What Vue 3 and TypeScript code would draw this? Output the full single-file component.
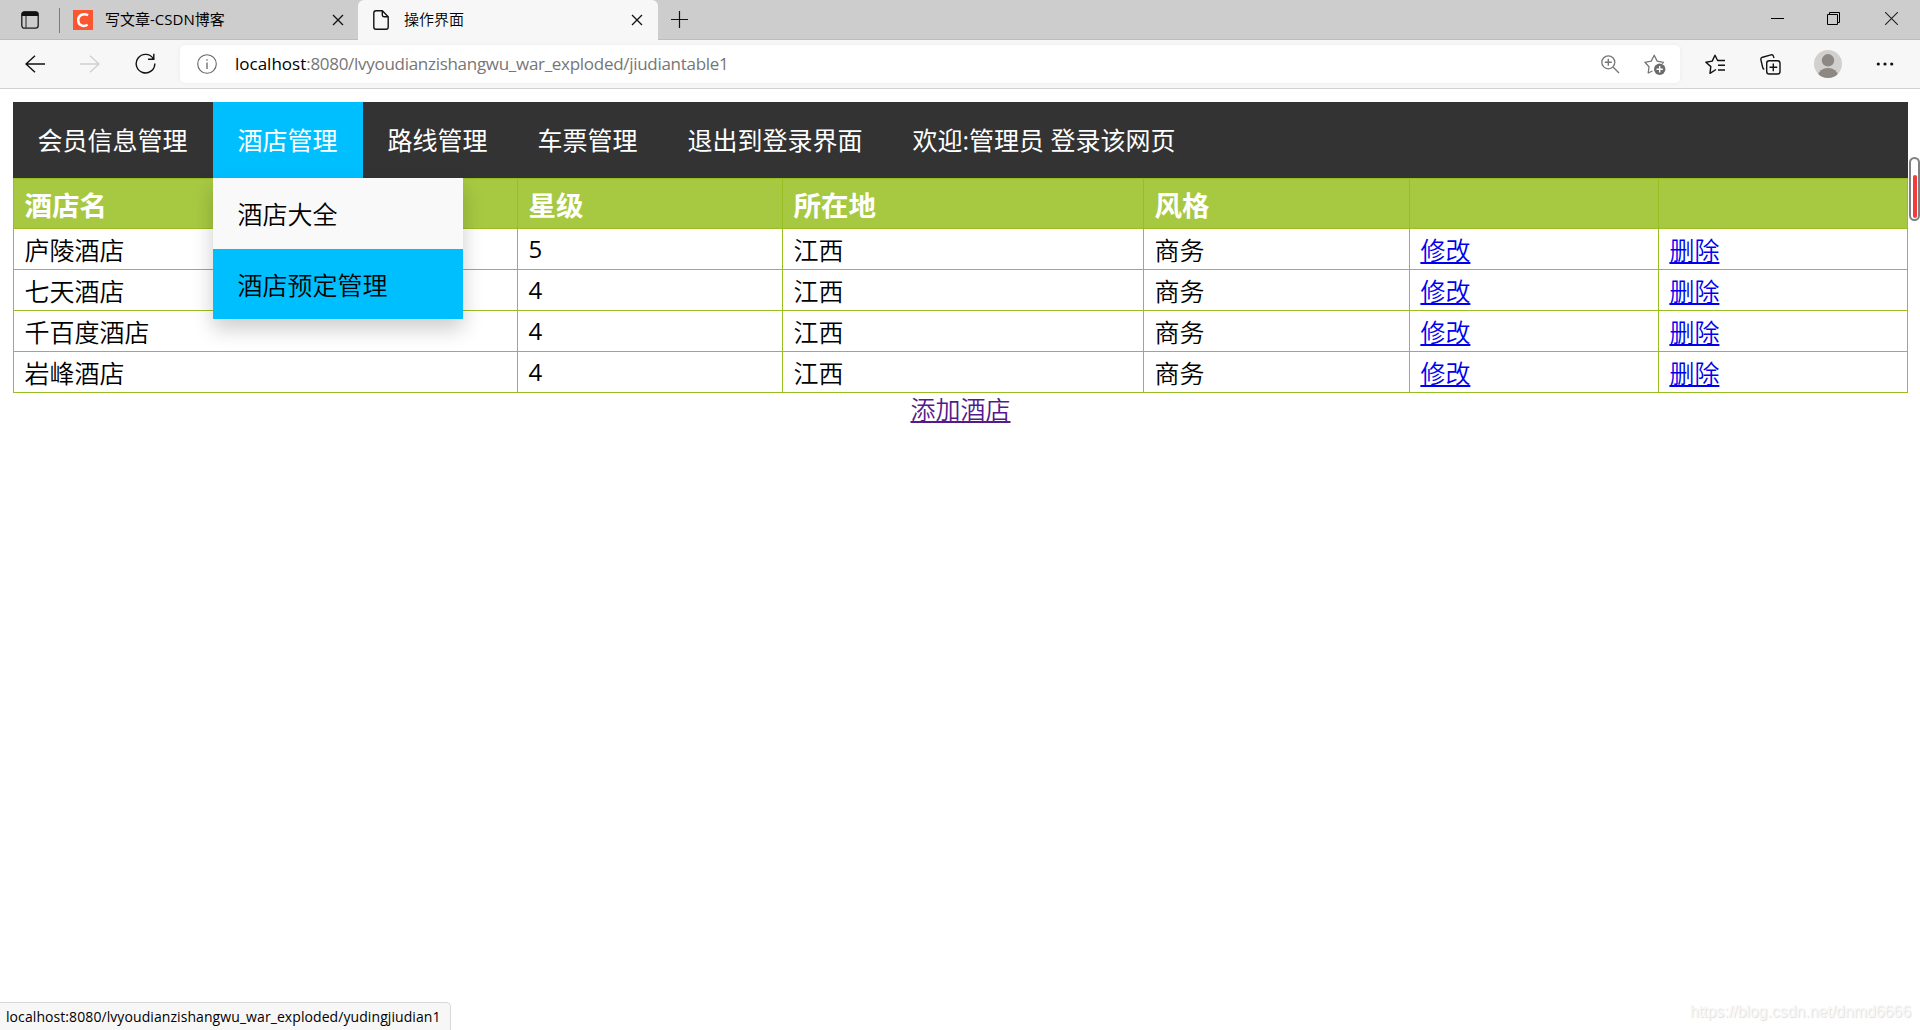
<script setup lang="ts">
interface Hotel {
  name: string
  stars: number
  place: string
  style: string
}

const menus: string[] = ['会员信息管理', '酒店管理', '路线管理', '车票管理', '退出到登录界面', '欢迎:管理员 登录该网页']
const submenu: string[] = ['酒店大全', '酒店预定管理']
const headers: string[] = ['酒店名', '星级', '所在地', '风格', '', '']
const hotels: Hotel[] = [
  { name: '庐陵酒店', stars: 5, place: '江西', style: '商务' },
  { name: '七天酒店', stars: 4, place: '江西', style: '商务' },
  { name: '千百度酒店', stars: 4, place: '江西', style: '商务' },
  { name: '岩峰酒店', stars: 4, place: '江西', style: '商务' },
]
</script>

<template>
  <div class="window">
    <header class="tabstrip">
      <svg class="panel-icon" width="18" height="18" viewBox="0 0 18 18">
        <rect x="0.8" y="0.8" width="16.4" height="16.4" rx="2.6" fill="none" stroke="#1b1b1b" stroke-width="1.3" />
        <path d="M0.8 5V3.2Q0.8 .6 3.4 .6H14.6Q17.2 .6 17.2 3.2V5Z" fill="#111" />
        <path d="M5 5V17" stroke="#333" stroke-width="1.1" />
      </svg>
      <span class="divider"></span>
      <svg class="csdn" width="20" height="20" viewBox="0 0 20 20">
        <rect width="20" height="20" fill="#fc5531" />
        <path d="M15 5.3C11.2 2.9 5.2 4.6 5.2 10.3C5.2 15.6 10.6 17.2 14.6 14.7" fill="none" stroke="#fff" stroke-width="2.5" />
      </svg>
      <span class="tab-title first">写文章-CSDN博客</span>
      <svg class="close-a" width="12" height="12" viewBox="0 0 12 12"><path d="M1 1L11 11M11 1L1 11" stroke="#111" stroke-width="1.3" /></svg>
      <div class="tab">
        <svg width="16" height="20" viewBox="0 0 16 20">
          <path d="M3 .8H9.3L15.2 6.7V17Q15.2 19.2 13 19.2H3Q.8 19.2 .8 17V3Q.8 .8 3 .8ZM9.3 1V5Q9.3 6.7 11 6.7H15" fill="none" stroke="#111" stroke-width="1.4" />
        </svg>
        <span class="tab-title">操作界面</span>
        <svg class="close-b" width="12" height="12" viewBox="0 0 12 12"><path d="M1 1L11 11M11 1L1 11" stroke="#111" stroke-width="1.3" /></svg>
      </div>
      <svg class="plus" width="17" height="17" viewBox="0 0 17 17"><path d="M8.5 0V17M0 8.5H17" stroke="#111" stroke-width="1.2" /></svg>
      <div class="controls">
        <svg width="13" height="13" viewBox="0 0 13 13"><path d="M0 6.5H13" stroke="#000" /></svg>
        <svg class="restore" width="13" height="13" viewBox="0 0 13 13"><path d="M.5 2.5H10.5V12.5H.5ZM2.5 2.5V.5H12.5V10.5H10.5" fill="none" stroke="#000" /></svg>
        <svg width="13" height="13" viewBox="0 0 13 13"><path d="M0 0L13 13M13 0L0 13" stroke="#222" stroke-width="1.1" /></svg>
      </div>
    </header>

    <div class="toolbar">
      <svg class="back" width="20" height="18" viewBox="0 0 20 18"><path d="M20 9H1M10 .7L1 9L10 17.3" fill="none" stroke="#111" stroke-width="1.4" /></svg>
      <svg class="forward" width="20" height="18" viewBox="0 0 20 18"><path d="M0 9H19M10 .7L19 9L10 17.3" fill="none" stroke="#cfcfcf" stroke-width="1.4" /></svg>
      <svg class="reload" width="21" height="21" viewBox="0 0 21 21"><path d="M18.3 5.6A9.3 9.3 0 1 0 19.8 10.5M18.8 .8V6.2H13" fill="none" stroke="#111" stroke-width="1.4" /></svg>
      <div class="address">
        <svg width="20" height="20" viewBox="0 0 20 20"><circle cx="10" cy="10" r="9.3" fill="none" stroke="#666" stroke-width="1.1" /><path d="M10 8.5V15M10 5.2V6.8" stroke="#666" stroke-width="1.3" /></svg>
        <span class="url"><b>localhost</b>:8080/lvyoudianzishangwu_war_exploded/jiudiantable1</span>
        <svg class="zoom" width="19" height="19" viewBox="0 0 19 19"><circle cx="7.3" cy="7.3" r="6.5" fill="none" stroke="#767676" stroke-width="1.3" /><path d="M12 12L18 18M7.3 3.8V10.8M3.8 7.3H10.8" stroke="#767676" stroke-width="1.4" /></svg>
        <svg class="star" width="22" height="21" viewBox="0 0 22 21"><path d="M8.5 17L4.2 19L5 12.7L.9 8.3L7.2 7.1L10.2 1.3L13.2 7.1L19.5 8.3L18.2 9.6" fill="none" stroke="#767676" stroke-width="1.3" stroke-linejoin="round" /><circle cx="15.7" cy="15.2" r="5.7" fill="#6c6c6c" /><path d="M15.7 12V18.4M12.5 15.2H18.9" stroke="#fff" stroke-width="1.4" /></svg>
      </div>
      <svg class="favs" width="21" height="21" viewBox="0 0 21 21"><path d="M11 15.5L5 19.3L5.8 12.6L.9 8.3L7.2 7.1L10 1.2L12.6 6.5H20M13 11.3H20M13 16H20" fill="none" stroke="#111" stroke-width="1.4" stroke-linejoin="round" /></svg>
      <svg class="collections" width="21" height="21" viewBox="0 0 21 21"><rect x="6.7" y="6.7" width="13.3" height="13.3" rx="2.6" fill="none" stroke="#111" stroke-width="1.4" /><path d="M13.3 9.5V17.2M9.5 13.3H17.2M4.3 15.2Q3 15 2.7 13.5L.9 5.8Q.5 3.8 2.5 3.2L11 .9Q13 .5 13.5 2.4L14 4" fill="none" stroke="#111" stroke-width="1.4" /></svg>
      <svg class="avatar" width="28" height="28" viewBox="0 0 28 28"><defs><clipPath id="face"><circle cx="14" cy="14" r="14" /></clipPath></defs><circle cx="14" cy="14" r="14" fill="#d2d0ce" /><g clip-path="url(#face)" fill="#8d8883"><circle cx="14" cy="10.3" r="6.2" /><ellipse cx="14" cy="26" rx="10" ry="8" /></g></svg>
      <svg class="more" width="18" height="4" viewBox="0 0 18 4"><g fill="#111"><circle cx="2.3" cy="2" r="1.6" /><circle cx="9" cy="2" r="1.6" /><circle cx="15.7" cy="2" r="1.6" /></g></svg>
    </div>

    <main class="page">
      <nav class="nav">
        <div v-for="(item, i) in menus" :key="item" class="nav-item" :class="{ active: i === 1 }">
          {{ item }}
          <div v-if="i === 1" class="dropdown">
            <a v-for="(sub, k) in submenu" :key="sub" :class="{ hover: k === 1 }">{{ sub }}</a>
          </div>
        </div>
      </nav>
      <table class="hotels">
        <colgroup>
          <col class="c1" /><col class="c2" /><col class="c3" /><col class="c4" /><col class="c5" /><col class="c5" />
        </colgroup>
        <tbody>
          <tr>
            <th v-for="(h, i) in headers" :key="i">{{ h }}</th>
          </tr>
          <tr v-for="hotel in hotels" :key="hotel.name">
            <td>{{ hotel.name }}</td>
            <td class="num">{{ hotel.stars }}</td>
            <td>{{ hotel.place }}</td>
            <td>{{ hotel.style }}</td>
            <td><a href="#">修改</a></td>
            <td><a href="#">删除</a></td>
          </tr>
        </tbody>
      </table>
      <div class="add"><a>添加酒店</a></div>
    </main>

    <div class="thumb"><span></span></div>
    <div class="status">localhost:8080/lvyoudianzishangwu_war_exploded/yudingjiudian1</div>
    <div class="watermark">https://blog.csdn.net/dnmd6666</div>
  </div>
</template>

<style>
body {
  margin: 0;
  overflow: hidden;
}
</style>

<style scoped>
.window {
  position: relative;
  width: 1920px;
  height: 1030px;
  overflow: hidden;
  background: #fff;
  color: #000;
  font-family: 'Open Sans', 'Noto Sans CJK SC', sans-serif;
}
svg {
  display: block;
  flex: none;
}
.tabstrip {
  display: flex;
  align-items: flex-start;
  box-sizing: border-box;
  height: 40px;
  background: #cdcdcd;
  box-shadow: inset 0 -1px #bcbcbc;
}
.panel-icon {
  margin: 11px 0 0 21px;
}
.divider {
  width: 1px;
  height: 25px;
  margin: 8px 13px 0 20px;
  background: #7c7c7c;
}
.csdn {
  margin-top: 10px;
}
.tab-title {
  font-size: 15px;
  font-weight: 350;
  line-height: 20px;
  white-space: nowrap;
}
.first {
  width: 227px;
  margin: 9px 0 0 12px;
  font-weight: 400;
}
.close-a {
  margin-top: 14px;
}
.tab {
  display: flex;
  align-items: flex-start;
  box-sizing: border-box;
  width: 300px;
  height: 40px;
  margin-left: 14px;
  padding: 10px 15px 0;
  border-radius: 6px 6px 0 0;
  background: #f7f7f7;
}
.tab .tab-title {
  margin: -1px 0 0 15px;
}
.close-b {
  margin: 4px 0 0 auto;
}
.plus {
  margin: 11px 0 0 13px;
}
.controls {
  display: flex;
  gap: 44px;
  margin: 12px 22px 0 auto;
}
.restore {
  margin: 0 1px 0 -1px;
}
.toolbar {
  display: flex;
  align-items: center;
  box-sizing: border-box;
  height: 49px;
  padding-left: 25px;
  border-bottom: 1px solid #d0d0d0;
  background: #f7f7f7;
}
.back,
.forward,
.reload {
  margin-bottom: 1px;
}
.forward {
  margin-left: 35px;
}
.reload {
  margin-left: 35px;
}
.address {
  display: flex;
  align-items: center;
  box-sizing: border-box;
  width: 1500px;
  height: 38px;
  margin-left: 24px;
  padding: 0 14px 0 17px;
  border-radius: 5px;
  background: #fff;
  box-shadow: 0 0 5px rgba(0, 0, 0, 0.05);
}
.url {
  margin-left: 18px;
  color: #767676;
  font-size: 17px;
  line-height: 24px;
  letter-spacing: -0.29px;
  white-space: nowrap;
}
.url b {
  color: #000;
  font-weight: 400;
  letter-spacing: 0;
}
.zoom {
  margin-left: auto;
}
.star {
  margin-left: 24px;
}
.favs {
  margin-left: 25px;
}
.collections {
  margin-left: 34px;
}
.avatar {
  margin-left: 33px;
}
.more {
  margin-left: 34px;
}
.page {
  width: 1895px;
  margin: 13px 0 0 13px;
}
.nav {
  display: flex;
  height: 76px;
  background: #333;
  color: #fff;
  font-size: 25px;
  line-height: 76px;
}
.nav-item {
  position: relative;
  padding: 0 25.6px 0 24.4px;
  white-space: nowrap;
}
.active {
  background: #00bfff;
}
.dropdown {
  position: absolute;
  z-index: 1;
  top: 76px;
  left: 0;
  width: 250px;
  height: 141px;
  background: #f9f9f9;
  box-shadow: 0 10px 20px rgba(0, 0, 0, 0.2);
  color: #000;
  font-weight: 350;
}
.dropdown a {
  display: block;
  box-sizing: border-box;
  height: 71px;
  padding: 1px 24.4px 0;
  line-height: 70px;
}
.dropdown .hover {
  height: 70px;
  background: #00bfff;
}
.hotels {
  width: 1895px;
  border: 0 solid #98bf21;
  border-width: 1px 0 0 1px;
  border-spacing: 0;
  table-layout: fixed;
  font-size: 25px;
}
.c1 {
  width: 504px;
}
.c2 {
  width: 265px;
}
.c3 {
  width: 361px;
}
.c4 {
  width: 266px;
}
.c5 {
  width: 249px;
}
th,
td {
  box-sizing: border-box;
  height: 41px;
  padding: 1px 0 0 10.4px;
  border: 0 solid #98bf21;
  border-width: 0 1px 1px 0;
  font-weight: 350;
  line-height: 38px;
  text-align: left;
}
th {
  height: 50px;
  padding-top: 4px;
  background: #a7c942;
  color: #fff;
  font-size: 27.5px;
  font-weight: 700;
  line-height: 45px;
}
td.num {
  padding-top: 0;
  font-size: 24px;
  font-weight: 400;
}
td a,
.add a {
  color: #00e;
  text-decoration: underline;
  text-decoration-skip-ink: none;
  text-decoration-thickness: 2px;
  text-underline-offset: 2px;
}
.add {
  font-size: 25px;
  font-weight: 350;
  line-height: 33px;
  text-align: center;
}
.add a {
  color: #551a8b;
}
.thumb {
  position: absolute;
  top: 157px;
  left: 1909px;
  box-sizing: border-box;
  width: 11px;
  height: 64px;
  padding: 16px 1.5px 1px;
  border: 2px solid #808080;
  border-radius: 6px;
  background: #fff;
}
.thumb span {
  display: block;
  height: 43px;
  border-radius: 2px;
  background: #f43b3b;
}
.status {
  position: absolute;
  bottom: 0;
  left: 0;
  box-sizing: border-box;
  width: 451px;
  height: 28px;
  padding-left: 6px;
  border: 1px solid #d9d9d9;
  border-width: 1px 1px 0 0;
  border-radius: 0 5px 0 0;
  background: #f7f7f7;
  font-size: 14px;
  line-height: 28px;
  letter-spacing: 0.08px;
  white-space: nowrap;
}
.watermark {
  position: absolute;
  right: 9px;
  bottom: 8px;
  color: #f7f7f7;
  font: 15.85px/20px 'Liberation Sans', sans-serif;
  text-shadow: 1px 1px 1px #ddd;
}
</style>
